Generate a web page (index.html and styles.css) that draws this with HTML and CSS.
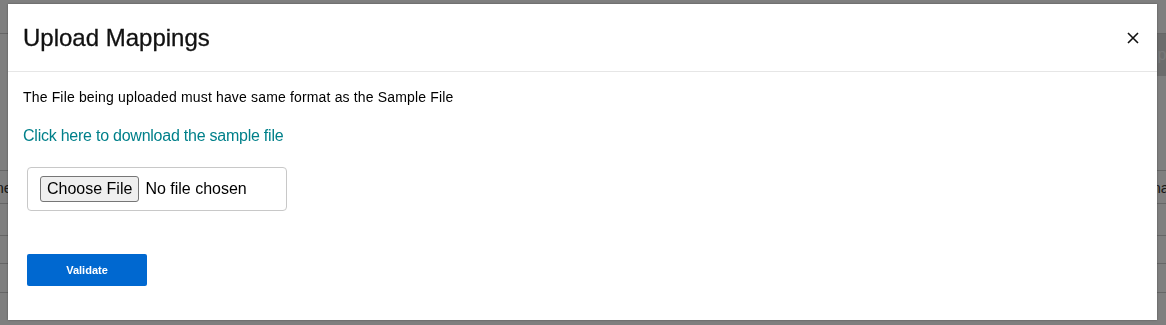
FILE: index.html
```html
<!DOCTYPE html>
<html lang="en">
<head>
  <meta charset="UTF-8">
  <meta name="viewport" content="width=device-width, initial-scale=1.0">
  <title>Upload Mappings</title>
  <link rel="stylesheet" href="styles.css">
</head>
<body>
  <!-- page behind the dialog -->
  <div class="page">
    <div class="topBar"></div>
    <div class="toolBar">
      <span class="toolBtn">Upload</span>
    </div>
    <div class="gridWrap">
      <div class="gridRow head"><span>Zone</span><span>name</span></div>
      <div class="gridRow short"><span></span><span></span></div>
      <div class="gridRow thin"><span></span><span></span></div>
      <div class="gridRow"><span></span><span></span></div>
      <div class="gridRow"><span></span><span></span></div>
    </div>
  </div>

  <div class="backdrop"></div>

  <div class="modal">
    <div class="modalHeader">
      <div class="modalTitle">Upload Mappings</div>
      <button class="closeBtn" aria-label="Close">
        <svg width="12" height="12" viewBox="0 0 12 12">
          <path d="M1 1L11 11M11 1L1 11" stroke="#111" stroke-width="1.6" fill="none"/>
        </svg>
      </button>
    </div>
    <div class="modalBody">
      <p class="hint">The File being uploaded must have same format as the Sample File</p>
      <a class="sampleLink" href="#">Click here to download the sample file</a>
      <div class="fileBox">
        <input type="file" class="fileInput">
      </div>
      <button class="validateBtn">Validate</button>
    </div>
  </div>
</body>
</html>
```

FILE: styles.css
```css
*{
  box-sizing: border-box;
}
body{
  margin: 0;
  font-family: "Liberation Sans", Arial, sans-serif;
  background: #fff;
  color: #000;
}

/* background page */
.page{
  width: 1166px;
  height: 325px;
  overflow: hidden;
}
.page .topBar{
  height: 34px;
  border-bottom: 1px solid #ccc;
}
.page .toolBar{
  height: 42px;
  display: flex;
  justify-content: flex-end;
}
.page .toolBtn{
  background: #d8d8d8;
  color: #f2f2f2;
  font-size: 16px;
  line-height: 42px;
  width: 20px;
  overflow: hidden;
  white-space: nowrap;
}
.gridWrap{
  margin-top: 94px;
}
.gridRow{
  display: flex;
  justify-content: space-between;
  height: 29px;
  border-top: 1px solid #ccc;
  font-size: 15px;
  line-height: 33px;
  color: #333;
}
.gridRow.head{
  height: 33px;
}
.gridRow.head span:first-child{
  margin-left: -22px;
}
.gridRow.head span:last-child{
  margin-right: -24px;
}
.gridRow.short{
  height: 32px;
}
.gridRow.thin{
  height: 28px;
}

.backdrop{
  position: fixed;
  inset: 0;
  background: rgba(0, 0, 0, 0.5);
}

/* dialog */
.modal{
  position: fixed;
  left: 8px;
  top: 4px;
  width: 1149px;
  height: 316px;
  background: #fff;
  box-shadow: 0 0 2px rgba(0, 0, 0, 0.35);
}
.modalHeader{
  display: flex;
  justify-content: space-between;
  align-items: center;
  padding: 16px 18px 15px 15px;
  border-bottom: 1px solid #e6e6e6;
}
.modalTitle{
  font-size: 24px;
  line-height: 36px;
  color: #111;
  -webkit-text-stroke: 0.3px #111;
}
.closeBtn{
  border: 0;
  background: none;
  padding: 0;
  width: 12px;
  height: 12px;
  display: flex;
  cursor: pointer;
}
.modalBody{
  padding: 15px 15px;
}
.hint{
  margin: 0 0 16px;
  font-size: 14px;
  line-height: 21px;
  letter-spacing: 0.16px;
}
.sampleLink{
  display: block;
  font-size: 16px;
  line-height: 24px;
  letter-spacing: -0.24px;
  color: #00808a;
  text-decoration: none;
}
.fileBox{
  width: 260px;
  height: 44px;
  margin: 19px 0 0 4px;
  padding: 8px 12px;
  border: 1px solid #c8c8c8;
  border-radius: 4px;
}
.fileInput{
  font-family: "Liberation Sans", Arial, sans-serif;
  font-size: 16px;
  color: #000;
  height: 26px;
  width: 234px;
}
.fileInput::file-selector-button{
  font-family: "Liberation Sans", Arial, sans-serif;
  font-size: 16px;
  height: 26px;
  padding: 0 6px;
  margin-right: 6px;
  background: #efefef;
  border: 1px solid #767676;
  border-radius: 3px;
  color: #000;
}
.validateBtn{
  display: block;
  width: 120px;
  height: 32px;
  margin: 43px 0 0 4px;
  border: 0;
  border-radius: 2px;
  background: #0068d0;
  color: #fff;
  font-family: "Liberation Sans", Arial, sans-serif;
  font-size: 11px;
  font-weight: bold;
  cursor: pointer;
}
```
